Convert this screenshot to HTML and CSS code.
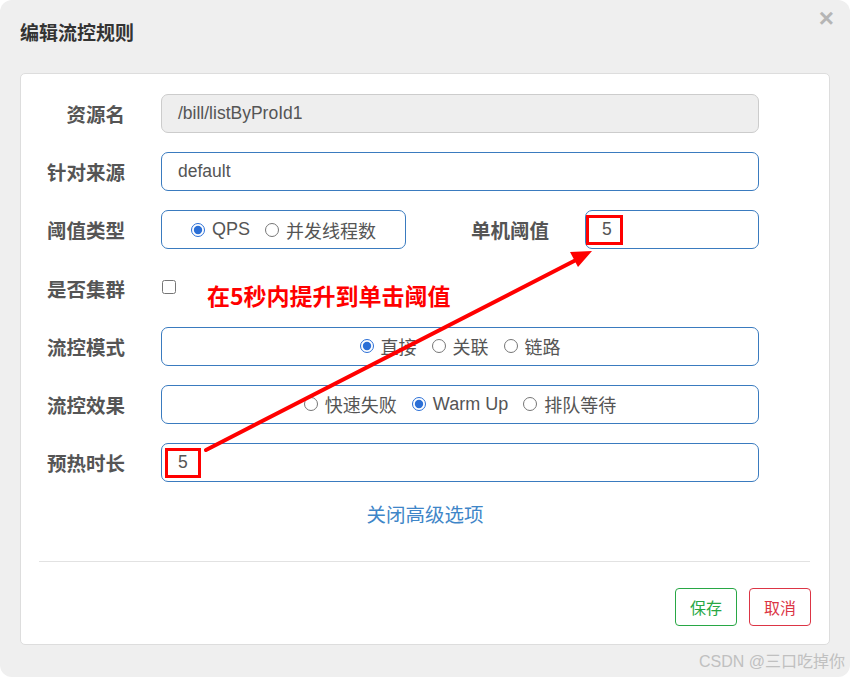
FILE: index.html
```html
<!DOCTYPE html>
<html lang="zh-CN">
<head>
<meta charset="utf-8">
<title>编辑流控规则</title>
<link rel="stylesheet" href="styles.css">
</head>
<body>
<div class="modal">
  <div class="header">
    <h4 class="title">编辑流控规则</h4>
    <span class="close">×</span>
  </div>
  <div class="card">
    <div class="form">
      <div class="row">
        <label class="label">资源名</label>
        <div class="field disabled">/bill/listByProId1</div>
      </div>
      <div class="row">
        <label class="label">针对来源</label>
        <div class="field">default</div>
      </div>
      <div class="row">
        <label class="label">阈值类型</label>
        <div class="split">
          <div class="field radios narrow">
            <label class="opt"><input type="radio" name="t" checked><span>QPS</span></label>
            <label class="opt"><input type="radio" name="t"><span>并发线程数</span></label>
          </div>
          <label class="label label2">单机阈值</label>
          <div class="field grow">5</div>
        </div>
      </div>
      <div class="row">
        <label class="label">是否集群</label>
        <div class="checkrow">
          <input type="checkbox" class="check">
          <span class="note">在5秒内提升到单击阈值</span>
        </div>
      </div>
      <div class="row">
        <label class="label">流控模式</label>
        <div class="field radios">
          <label class="opt"><input type="radio" name="m" checked><span>直接</span></label>
          <label class="opt"><input type="radio" name="m"><span>关联</span></label>
          <label class="opt"><input type="radio" name="m"><span>链路</span></label>
        </div>
      </div>
      <div class="row">
        <label class="label">流控效果</label>
        <div class="field radios">
          <label class="opt"><input type="radio" name="e"><span>快速失败</span></label>
          <label class="opt"><input type="radio" name="e" checked><span>Warm Up</span></label>
          <label class="opt"><input type="radio" name="e"><span>排队等待</span></label>
        </div>
      </div>
      <div class="row">
        <label class="label">预热时长</label>
        <div class="field">5</div>
      </div>
    </div>
    <div class="link">关闭高级选项</div>
    <div class="divider"></div>
    <div class="footer">
      <button class="btn save">保存</button>
      <button class="btn cancel">取消</button>
    </div>
  </div>
  <div class="watermark">CSDN @三口吃掉你</div>
  <svg class="overlay" width="850" height="677" viewBox="0 0 850 677">
    <rect x="587.5" y="216.5" width="34" height="27" fill="none" stroke="#ff0000" stroke-width="3"/>
    <rect x="166.5" y="449.5" width="33" height="27" fill="none" stroke="#ff0000" stroke-width="3"/>
    <line x1="206" y1="450" x2="576" y2="260" stroke="#ff0000" stroke-width="4" stroke-linecap="round"/>
    <polygon points="592,251 570,252 578,267" fill="#ff0000"/>
  </svg>
</div>
</body>
</html>
```
FILE: styles.css
```css
html, body {
  margin: 0;
  padding: 0;
  background: #ffffff;
}
body {
  font-family: "Liberation Sans", "Noto Sans CJK SC", sans-serif;
  width: 850px;
  height: 677px;
  overflow: hidden;
}
.modal {
  position: relative;
  width: 850px;
  height: 677px;
  box-sizing: border-box;
  background: #efefef;
  border-radius: 12px;
  padding: 0 20px;
}
.header {
  height: 73px;
  box-sizing: border-box;
  padding-top: 20px;
  position: relative;
}
.title {
  margin: 0;
  font-family: "Noto Sans CJK SC", sans-serif;
  font-size: 19px;
  line-height: 24px;
  font-weight: bold;
  color: #333;
}
.close {
  position: absolute;
  right: -4px;
  top: 4px;
  font-size: 26px;
  font-weight: bold;
  color: #b5b5b5;
  line-height: 28px;
}
.card {
  background: #fff;
  border: 1px solid #dddddd;
  border-radius: 5px;
  padding-top: 20px;
  padding-bottom: 18px;
}
.form {
  display: flex;
  flex-direction: column;
  gap: 19.2px;
  padding-right: 70px;
}
.row {
  display: flex;
  align-items: center;
  height: 39px;
}
.label {
  width: 140px;
  flex: none;
  box-sizing: border-box;
  padding-right: 36px;
  text-align: right;
  font-family: "Noto Sans CJK SC", sans-serif;
  font-weight: bold;
  font-size: 19.5px;
  color: #555;
}
.field {
  flex: 1;
  height: 39px;
  box-sizing: border-box;
  border: 1px solid #3a7bbf;
  border-radius: 7px;
  padding: 0 16px;
  display: flex;
  align-items: center;
  font-size: 17.5px;
  color: #555;
  background: #fff;
}
.field.disabled {
  background: #eeeeee;
  border-color: #cccccc;
}
.split {
  flex: 1;
  display: flex;
  align-items: center;
}
.narrow {
  flex: none;
  width: 245px;
}
.label2 {
  width: 179px;
}
.grow {
  flex: 1;
}
.radios {
  justify-content: center;
  gap: 15px;
}
.opt {
  display: flex;
  align-items: center;
  gap: 7px;
  font-family: "Liberation Sans", "Noto Sans CJK SC", sans-serif;
  font-size: 18px;
  color: #555;
}
.opt input {
  margin: 0;
  width: 14px;
  height: 14px;
  accent-color: #2b6fd6;
}
.checkrow {
  display: flex;
  align-items: center;
}
.check {
  margin: 0 0 0 1px;
  width: 14px;
  height: 14px;
  position: relative;
  top: -1px;
}
.note {
  margin-left: 31px;
  margin-top: 14px;
  font-family: "Noto Sans CJK SC", sans-serif;
  font-weight: bold;
  font-size: 23px;
  color: #ff0000;
}
.link {
  margin-top: 20px;
  text-align: center;
  font-family: "Noto Sans CJK SC", sans-serif;
  font-size: 19.5px;
  line-height: 24px;
  color: #3f86c8;
}
.divider {
  margin: 35px 19px 0 18px;
  height: 1px;
  background: #e2e2e2;
}
.footer {
  display: flex;
  justify-content: flex-end;
  gap: 12px;
  padding: 26px 18px 0 0;
}
.btn {
  width: 62px;
  height: 38px;
  background: #fff;
  border-radius: 4px;
  font-family: "Noto Sans CJK SC", sans-serif;
  font-size: 16px;
  padding: 0;
}
.save {
  border: 1px solid #28a745;
  color: #28a745;
}
.cancel {
  border: 1px solid #dc3545;
  color: #dc3545;
}
.watermark {
  position: absolute;
  right: 5px;
  bottom: 5px;
  font-size: 16px;
  color: #c0c0c0;
  font-family: "Liberation Sans", "Noto Sans CJK SC", sans-serif;
}
.overlay {
  position: absolute;
  left: 0;
  top: 0;
  pointer-events: none;
}
```
